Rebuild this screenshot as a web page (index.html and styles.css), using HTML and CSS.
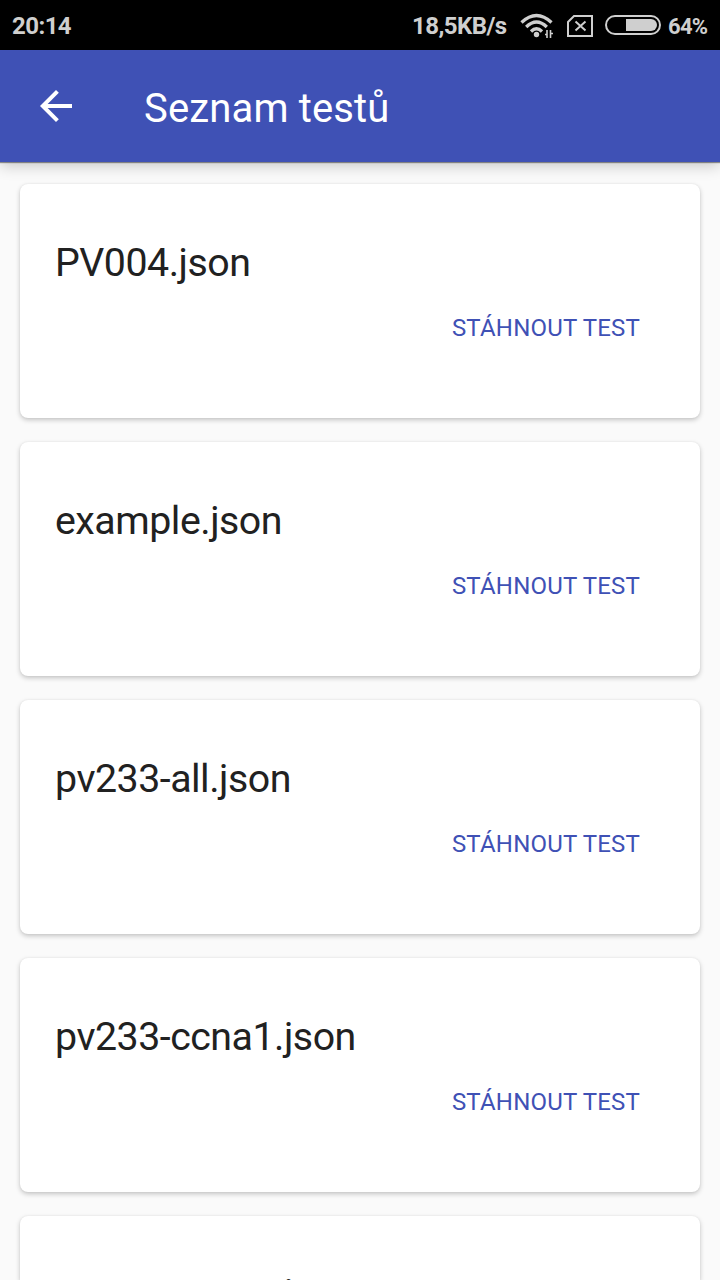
FILE: index.html
```html
<!DOCTYPE html>
<html lang="cs">
<head>
<meta charset="utf-8">
<title>Seznam testů</title>
<link rel="stylesheet" href="styles.css">
</head>
<body>
<div class="status">
  <span class="clock">20:14</span>
  <span class="speed">18,5KB/s</span>
  <svg class="wifi" width="34" height="26" viewBox="0 0 34 26" fill="none" stroke="#cfcfcf" stroke-width="3.300">
    <path d="M1.500 9.500Q16.500-4.500 31.500 9.500M6.200 14Q16.500 4 26.800 14M11 18.500Q16.500 13 22 18.500"/>
    <circle cx="16.500" cy="21.500" r="2.700" fill="#cfcfcf" stroke="none"/>
    <path stroke="#000" stroke-width="3" d="M24.500 16v9"/>
    <path stroke-width="1.600" d="M25 21.500H27M27 17v8M30.500 17v8M30.500 20.500h2.500"/>
  </svg>
  <svg class="sim" width="26" height="22" viewBox="0 0 26 22" fill="none" stroke="#cfcfcf" stroke-width="2">
    <path d="M1 7L7 1H25V21H1Z"/>
    <path d="M8.500 6.500l10 9M18.500 6.500l-10 9"/>
  </svg>
  <svg class="battery" width="56" height="20" viewBox="0 0 56 20">
    <rect x="1" y="1" width="54" height="18" rx="9" fill="none" stroke="#cfcfcf" stroke-width="2"/>
    <path d="M21 4H46a6 6 0 0 1 0 12H21Z" fill="#cfcfcf"/>
  </svg>
  <span class="percent">64%</span>
</div>
<header class="toolbar">
  <svg class="back" width="48" height="48" viewBox="0 0 24 24" fill="#fff"><path d="M20 11H7.830l5.590-5.590L12 4l-8 8 8 8 1.410-1.410L7.830 13H20v-2z"/></svg>
  <h1 class="title">Seznam testů</h1>
</header>
<main class="list">
  <section class="card"><h2 class="name">PV004.json</h2><button class="download">STÁHNOUT TEST</button></section>
  <section class="card"><h2 class="name">example.json</h2><button class="download">STÁHNOUT TEST</button></section>
  <section class="card"><h2 class="name">pv233-all.json</h2><button class="download">STÁHNOUT TEST</button></section>
  <section class="card"><h2 class="name">pv233-ccna1.json</h2><button class="download">STÁHNOUT TEST</button></section>
  <section class="card"><h2 class="name">pv233-ccna2.<span class="ext">json</span></h2></section>
</main>
</body>
</html>
```
FILE: styles.css
```css
* { box-sizing: border-box; }
body {
  margin: 0;
  height: 1280px;
  overflow: hidden;
  display: flex;
  flex-direction: column;
  background: #fafafa;
  font-family: Roboto, sans-serif;
}
.status {
  flex: none;
  height: 50px;
  padding: 2px 12px 0;
  display: flex;
  align-items: center;
  background: #000;
  color: #cfcfcf;
  font-size: 24px;
  font-weight: 700;
  letter-spacing: -0.55px;
  white-space: nowrap;
}
.clock { flex: 1; }
.speed { width: 97px; margin-right: 11px; }
.wifi { margin-right: 13px; }
.sim { margin-right: 12px; }
.battery { margin: 0 7px 2px 0; }
.percent { width: 40px; font-size: 22px; letter-spacing: -0.7px; }
.toolbar {
  flex: none;
  position: relative;
  height: 112px;
  padding-left: 32px;
  display: flex;
  align-items: center;
  gap: 64px;
  background: #3f51b5;
  color: #fff;
  box-shadow: 0 1px 1px rgba(0,0,0,.4), 0 4px 14px rgba(0,0,0,.2);
}
.title { margin: 6px 0 0; font-size: 40px; line-height: 48px; font-weight: 400; letter-spacing: 0.15px; }
.list {
  flex: 1;
  min-height: 0;
  overflow: hidden;
  display: flex;
  flex-direction: column;
  gap: 24px;
  padding: 22px 20px 0;
}
.card {
  flex: none;
  height: 234px;
  padding: 56px 60px 0 35px;
  display: flex;
  flex-direction: column;
  border-radius: 8px;
  background: #fff;
  box-shadow: 0 2px 5px rgba(0,0,0,.22), 0 0 2px rgba(0,0,0,.06);
}
.card:last-child { height: 64px; padding-right: 0; border-radius: 8px 8px 0 0; }
.name { margin: 0; font-size: 39.3px; line-height: 46px; font-weight: 400; letter-spacing: -0.48px; color: #212121; }
.ext { line-height: 1; vertical-align: 1px; }
.download {
  align-self: flex-end;
  margin: 27px 0 0;
  padding: 0;
  border: 0;
  background: none;
  font: 400 24px/30px Roboto, sans-serif;
  letter-spacing: 0.2px;
  color: #3f51b5;
}
```
